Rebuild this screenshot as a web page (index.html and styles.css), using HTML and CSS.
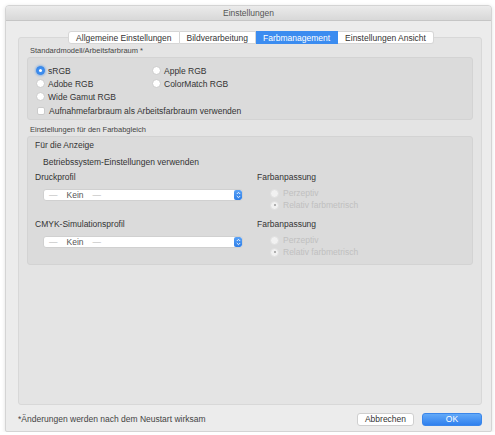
FILE: index.html
```html
<!DOCTYPE html>
<html>
  <head>
    <title>Einstellungen</title>
    <meta name="viewport" content="width=device-width, initial-scale=1" />
    <link rel="stylesheet" href="styles.css">
  </head>
  <body>
    <div class="window">
      <div class="titlebar">Einstellungen</div>
      <div class="main">
        <div class="tabs">
          <span class="tab">Allgemeine Einstellungen</span>
          <span class="tab">Bildverarbeitung</span>
          <span class="tab active">Farbmanagement</span>
          <span class="tab">Einstellungen Ansicht</span>
        </div>
        <div class="panel">
          <div class="group-label">Standardmodell/Arbeitsfarbraum *</div>
          <div class="box space">
            <div class="choices">
              <label class="opt"><span class="radio on"></span>sRGB</label>
              <label class="opt"><span class="radio"></span>Apple RGB</label>
              <label class="opt"><span class="radio"></span>Adobe RGB</label>
              <label class="opt"><span class="radio"></span>ColorMatch RGB</label>
              <label class="opt"><span class="radio"></span>Wide Gamut RGB</label>
            </div>
            <label class="opt check-row"><span class="check"></span>Aufnahmefarbraum als Arbeitsfarbraum verwenden</label>
          </div>
          <div class="group-label second">Einstellungen für den Farbabgleich</div>
          <div class="box match">
            <div class="line">Für die Anzeige</div>
            <div class="line indent os">Betriebssystem-Einstellungen verwenden</div>

            <div class="profile-row">
              <div class="profile">
                <div class="line">Druckprofil</div>
                <div class="select">
                  <span class="value"><span class="dash">—</span>Kein<span class="dash">—</span></span>
                  <span class="stepper">
                    <svg width="5" height="8" viewBox="0 0 5 8"><path d="M0.8 3 L2.5 1.3 L4.2 3 M0.8 5 L2.5 6.7 L4.2 5" fill="none" stroke="#fff" stroke-width="0.9"/></svg>
                  </span>
                </div>
              </div>
              <div class="intent">
                <div class="line">Farbanpassung</div>
                <div class="intent-opts">
                  <label class="opt off"><span class="radio dis"></span>Perzeptiv</label>
                  <label class="opt off"><span class="radio dis sel"></span>Relativ farbmetrisch</label>
                </div>
              </div>
            </div>

            <div class="profile-row">
              <div class="profile">
                <div class="line">CMYK-Simulationsprofil</div>
                <div class="select">
                  <span class="value"><span class="dash">—</span>Kein<span class="dash">—</span></span>
                  <span class="stepper">
                    <svg width="5" height="8" viewBox="0 0 5 8"><path d="M0.8 3 L2.5 1.3 L4.2 3 M0.8 5 L2.5 6.7 L4.2 5" fill="none" stroke="#fff" stroke-width="0.9"/></svg>
                  </span>
                </div>
              </div>
              <div class="intent">
                <div class="line">Farbanpassung</div>
                <div class="intent-opts">
                  <label class="opt off"><span class="radio dis"></span>Perzeptiv</label>
                  <label class="opt off"><span class="radio dis sel"></span>Relativ farbmetrisch</label>
                </div>
              </div>
            </div>
          </div>
        </div>
        <div class="footer">
          <span class="note">*Änderungen werden nach dem Neustart wirksam</span>
          <div class="buttons">
            <button class="btn">Abbrechen</button>
            <button class="btn primary">OK</button>
          </div>
        </div>
      </div>
    </div>
  </body>
</html>
```

FILE: styles.css
```css
html {
  font-family: "Liberation Sans", Arial, Helvetica, sans-serif;
  font-size: 8.5px;
  color: #333;
}
body {
  margin: 0;
  background-color: #fff;
}
.window {
  margin: 5px 0 0 5px;
  width: 487px;
  height: 427px;
  box-sizing: border-box;
  background-color: #ececec;
  border: 1px solid #d4d4d4;
  border-radius: 4px 4px 2px 2px;
  box-shadow: 0 1px 4px rgba(0, 0, 0, 0.12);
  display: flex;
  flex-direction: column;
  overflow: hidden;
}
.titlebar {
  height: 14px;
  line-height: 14px;
  text-align: center;
  color: #555;
  background: linear-gradient(#ebebeb, #d8d8d8);
  border-bottom: 1px solid #c6c6c6;
}
.main {
  flex: 1;
  display: flex;
  flex-direction: column;
  padding: 0 9px 0 12px;
}

/* segmented tab control sits across the panel's top edge */
.tabs {
  display: flex;
  justify-content: center;
  margin: 10px 0 -7px 0;
  padding-left: 2px;
  position: relative;
  z-index: 1;
}
.tab {
  height: 13px;
  line-height: 13px;
  padding: 0 7px;
  background-color: #fff;
  border: 1px solid #d6d6d6;
  border-left: none;
  box-sizing: border-box;
  color: #333;
}
.tab:first-child {
  border-left: 1px solid #d6d6d6;
  border-radius: 3px 0 0 3px;
}
.tab:last-child {
  border-radius: 0 3px 3px 0;
}
.tab.active {
  background-color: #3b8cf0;
  border-color: #3b8cf0;
  color: #fff;
}

.panel {
  height: 368px;
  box-sizing: border-box;
  background-color: #e4e4e4;
  border: 1px solid #d8d8d8;
  border-radius: 3px;
  padding: 7px 8px 0 8px;
}
.group-label {
  line-height: 11px;
  padding-left: 3px;
  margin-bottom: 1px;
  font-size: 7.5px;
  color: #444;
}
.group-label.second {
  margin-top: 4px;
}
.box {
  background-color: #dbdbdb;
  border: 1px solid #d3d3d3;
  border-radius: 3px;
  box-sizing: border-box;
}
.space {
  height: 63px;
  padding: 6px 0 0 8px;
}
.choices {
  display: grid;
  grid-template-columns: 116px auto;
}
.opt {
  display: flex;
  align-items: center;
  height: 13px;
  white-space: nowrap;
}
.check-row {
  margin-top: 1px;
}
.radio {
  width: 9px;
  height: 9px;
  box-sizing: border-box;
  border-radius: 50%;
  background-color: #fff;
  border: 1px solid #cbcbcb;
  margin-right: 3px;
  flex: none;
}
.radio.on {
  background-color: #3d8ef0;
  border-color: #3a86e6;
  box-shadow: 0 0 2px 1px rgba(61, 142, 240, 0.45);
  position: relative;
}
.radio.on::after {
  content: "";
  position: absolute;
  left: 2px;
  top: 2px;
  width: 3px;
  height: 3px;
  border-radius: 50%;
  background-color: #fff;
}
.radio.dis {
  background-color: #f1f1f1;
  border-color: #e0e0e0;
  margin-right: 4px;
}
.radio.sel {
  position: relative;
}
.radio.sel::after {
  content: "";
  position: absolute;
  left: 2.5px;
  top: 2.5px;
  width: 2px;
  height: 2px;
  border-radius: 50%;
  background-color: #9a9a9a;
}
.check {
  width: 8px;
  height: 8px;
  box-sizing: border-box;
  background-color: #fff;
  border: 1px solid #cbcbcb;
  border-radius: 2px;
  margin: 0 4px 0 1px;
  flex: none;
}

.match {
  height: 129px;
  padding: 3px 0 0 7px;
}
.line {
  line-height: 11px;
}
.indent {
  padding-left: 8px;
}
.os {
  margin-top: 6px;
}
.profile-row {
  display: flex;
  margin-top: 4px;
}
.profile-row + .profile-row {
  margin-top: 8px;
}
.profile {
  width: 222px;
}
.select {
  display: flex;
  align-items: center;
  justify-content: space-between;
  width: 200px;
  height: 12px;
  box-sizing: border-box;
  margin: 6px 0 0 8px;
  background-color: #fff;
  border: 1px solid #d0d0d0;
  border-radius: 3px;
  overflow: hidden;
}
.value {
  padding-left: 5px;
  color: #555;
}
.dash {
  color: #b5b5b5;
  margin: 0 9px 0 0;
}
.value .dash:last-child {
  margin: 0 0 0 9px;
}
.stepper {
  width: 8px;
  height: 10px;
  margin-right: 0;
  background: linear-gradient(#5aa2f6, #2d7ee8);
  border-radius: 2px;
  display: flex;
  align-items: center;
  justify-content: center;
}
.intent-opts {
  margin: 4px 0 0 13px;
}
.intent-opts .opt {
  height: 12px;
}
.off {
  color: #c0c0c0;
}

.footer {
  flex: 1;
  display: flex;
  align-items: center;
  justify-content: space-between;
  padding: 2px 0 0 0;
}
.note {
  padding-left: 0;
  color: #444;
}
.buttons {
  display: flex;
  gap: 8px;
}
.btn {
  font-family: inherit;
  font-size: 8.5px;
  height: 13px;
  line-height: 11px;
  padding: 0;
  width: 57px;
  background-color: #fff;
  border: 1px solid #cfcfcf;
  border-radius: 3px;
  color: #333;
}
.btn.primary {
  width: 60px;
  background: linear-gradient(#62a9f8, #2f80ee);
  border-color: #3a86ea;
  color: #fff;
}
```
